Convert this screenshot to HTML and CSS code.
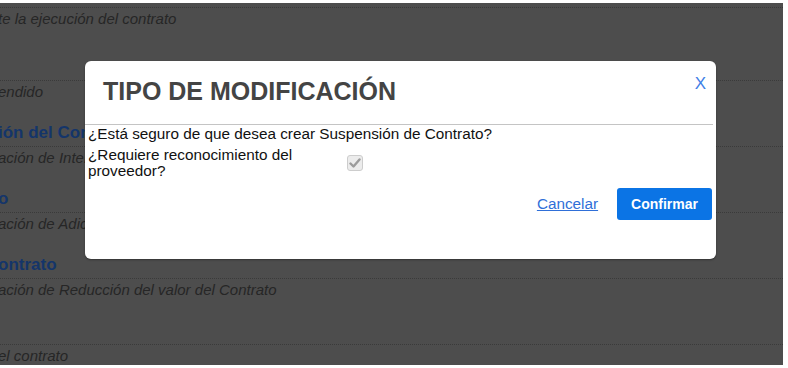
FILE: index.html
```html
<!DOCTYPE html>
<html lang="es">
<head>
  <meta charset="UTF-8">
  <title>Tipo de modificación</title>
  <link rel="stylesheet" href="styles.css">
</head>
<body>

  <div class="pantalla">
    <!-- Listado de tipos de modificación (detrás del modal) -->
    <div class="listado">
      <div class="item primero">
        <h3 class="item-titulo">&nbsp;</h3>
        <p class="item-desc">te la ejecución del contrato</p>
      </div>
      <div class="item">
        <h3 class="item-titulo">&nbsp;</h3>
        <p class="item-desc">endido</p>
      </div>
      <div class="item">
        <h3 class="item-titulo">ión del Contrato</h3>
        <p class="item-desc">ación de Interventoría</p>
      </div>
      <div class="item">
        <h3 class="item-titulo">o</h3>
        <p class="item-desc">ación de Adición</p>
      </div>
      <div class="item">
        <h3 class="item-titulo">ontrato</h3>
        <p class="item-desc">ación de Reducción del valor del Contrato</p>
      </div>
      <div class="item">
        <h3 class="item-titulo">&nbsp;</h3>
        <p class="item-desc">el contrato</p>
      </div>
    </div>

    <!-- Modal -->
    <div class="capa">
      <div class="modal">
        <a class="cerrar" href="#">X</a>
        <div class="modal-cabecera">
          <h2>TIPO DE MODIFICACIÓN</h2>
        </div>
        <div class="modal-cuerpo">
          <p class="pregunta">¿Está seguro de que desea crear Suspensión de Contrato?</p>
          <div class="fila-check">
            <label>¿Requiere reconocimiento del proveedor?</label>
            <span class="casilla">
              <svg width="12" height="12" viewBox="0 0 12 12">
                <path d="M1.5 6.5 L4.5 9.5 L10.5 2.5" fill="none" stroke="#9c9c9c" stroke-width="2.4" stroke-linecap="round" stroke-linejoin="round"/>
              </svg>
            </span>
          </div>
          <div class="acciones">
            <a class="cancelar" href="#">Cancelar</a>
            <button class="confirmar">Confirmar</button>
          </div>
        </div>
      </div>
    </div>
  </div>

</body>
</html>
```

FILE: styles.css
```css
:root {
  --color-fondo: #4d4d4d;
  --color-texto-fondo: #262626;
  --color-titulo-fondo: #14356a;
  --color-punteado: #3a3a3a;
  --color-azul: #0b74e5;
  --color-enlace: #2f6fd8;
}

body {
  margin: 0;
  background: #fff;
  font-family: 'Liberation Sans', Arial, sans-serif;
}

.pantalla {
  position: relative;
  height: 362px;
  margin: 3px 5px 3px 0;
  background: var(--color-fondo);
  overflow: hidden;
}

/* LISTADO DE FONDO */
.listado {
  margin: -19px 0 0 -2px;
  white-space: nowrap;
}

.item {
  margin-bottom: 21px;
}

.item.primero {
  margin-bottom: 28px;
}

.item-titulo {
  margin: 0;
  padding-bottom: 3px;
  font-size: 17px;
  line-height: 20px;
  font-weight: bold;
  color: var(--color-titulo-fondo);
  border-bottom: 1px dotted var(--color-punteado);
}

.item-desc {
  margin: 1px 0 0;
  font-size: 15px;
  line-height: 20px;
  font-style: italic;
  color: var(--color-texto-fondo);
}

/* MODAL */
.capa {
  position: absolute;
  top: 0;
  left: 0;
  right: 0;
  bottom: 0;
  padding: 58px 0 0 85px;
}

.modal {
  position: relative;
  width: 631px;
  background: #fff;
  border-radius: 6px;
  box-shadow: 0 1px 2px rgba(0,0,0,0.35);
}

.cerrar {
  position: absolute;
  top: 14px;
  right: 10px;
  font-size: 17px;
  line-height: 17px;
  color: #3f80e6;
  text-decoration: none;
}

.modal-cabecera {
  margin-right: 3px;
  padding: 16px 18px 18px;
  border-bottom: 1px solid #c4c4c4;
}

.modal-cabecera h2 {
  margin: 0;
  font-size: 25px;
  line-height: 29px;
  font-weight: bold;
  color: #444;
}

.modal-cuerpo {
  padding: 1px 4px 39px 3px;
  font-size: 15.3px;
  line-height: 16px;
  color: #111;
}

.pregunta {
  margin: 0 0 5px;
}

.fila-check {
  display: grid;
  grid-template-columns: 255px auto;
  align-items: center;
}

.casilla {
  display: flex;
  align-items: center;
  justify-content: center;
  width: 14px;
  height: 14px;
  margin-left: 4px;
  background: #ececec;
  border: 1px solid #cdcdcd;
  border-radius: 3px;
}

.acciones {
  display: flex;
  justify-content: flex-end;
  align-items: center;
  gap: 19px;
  margin-top: 9px;
}

.cancelar {
  color: var(--color-enlace);
  text-decoration: underline;
}

.confirmar {
  height: 32px;
  padding: 0 14px;
  background: var(--color-azul);
  color: #fff;
  border: none;
  border-radius: 3px;
  font-family: 'Liberation Sans', Arial, sans-serif;
  font-size: 14px;
  font-weight: bold;
  cursor: pointer;
}
```
